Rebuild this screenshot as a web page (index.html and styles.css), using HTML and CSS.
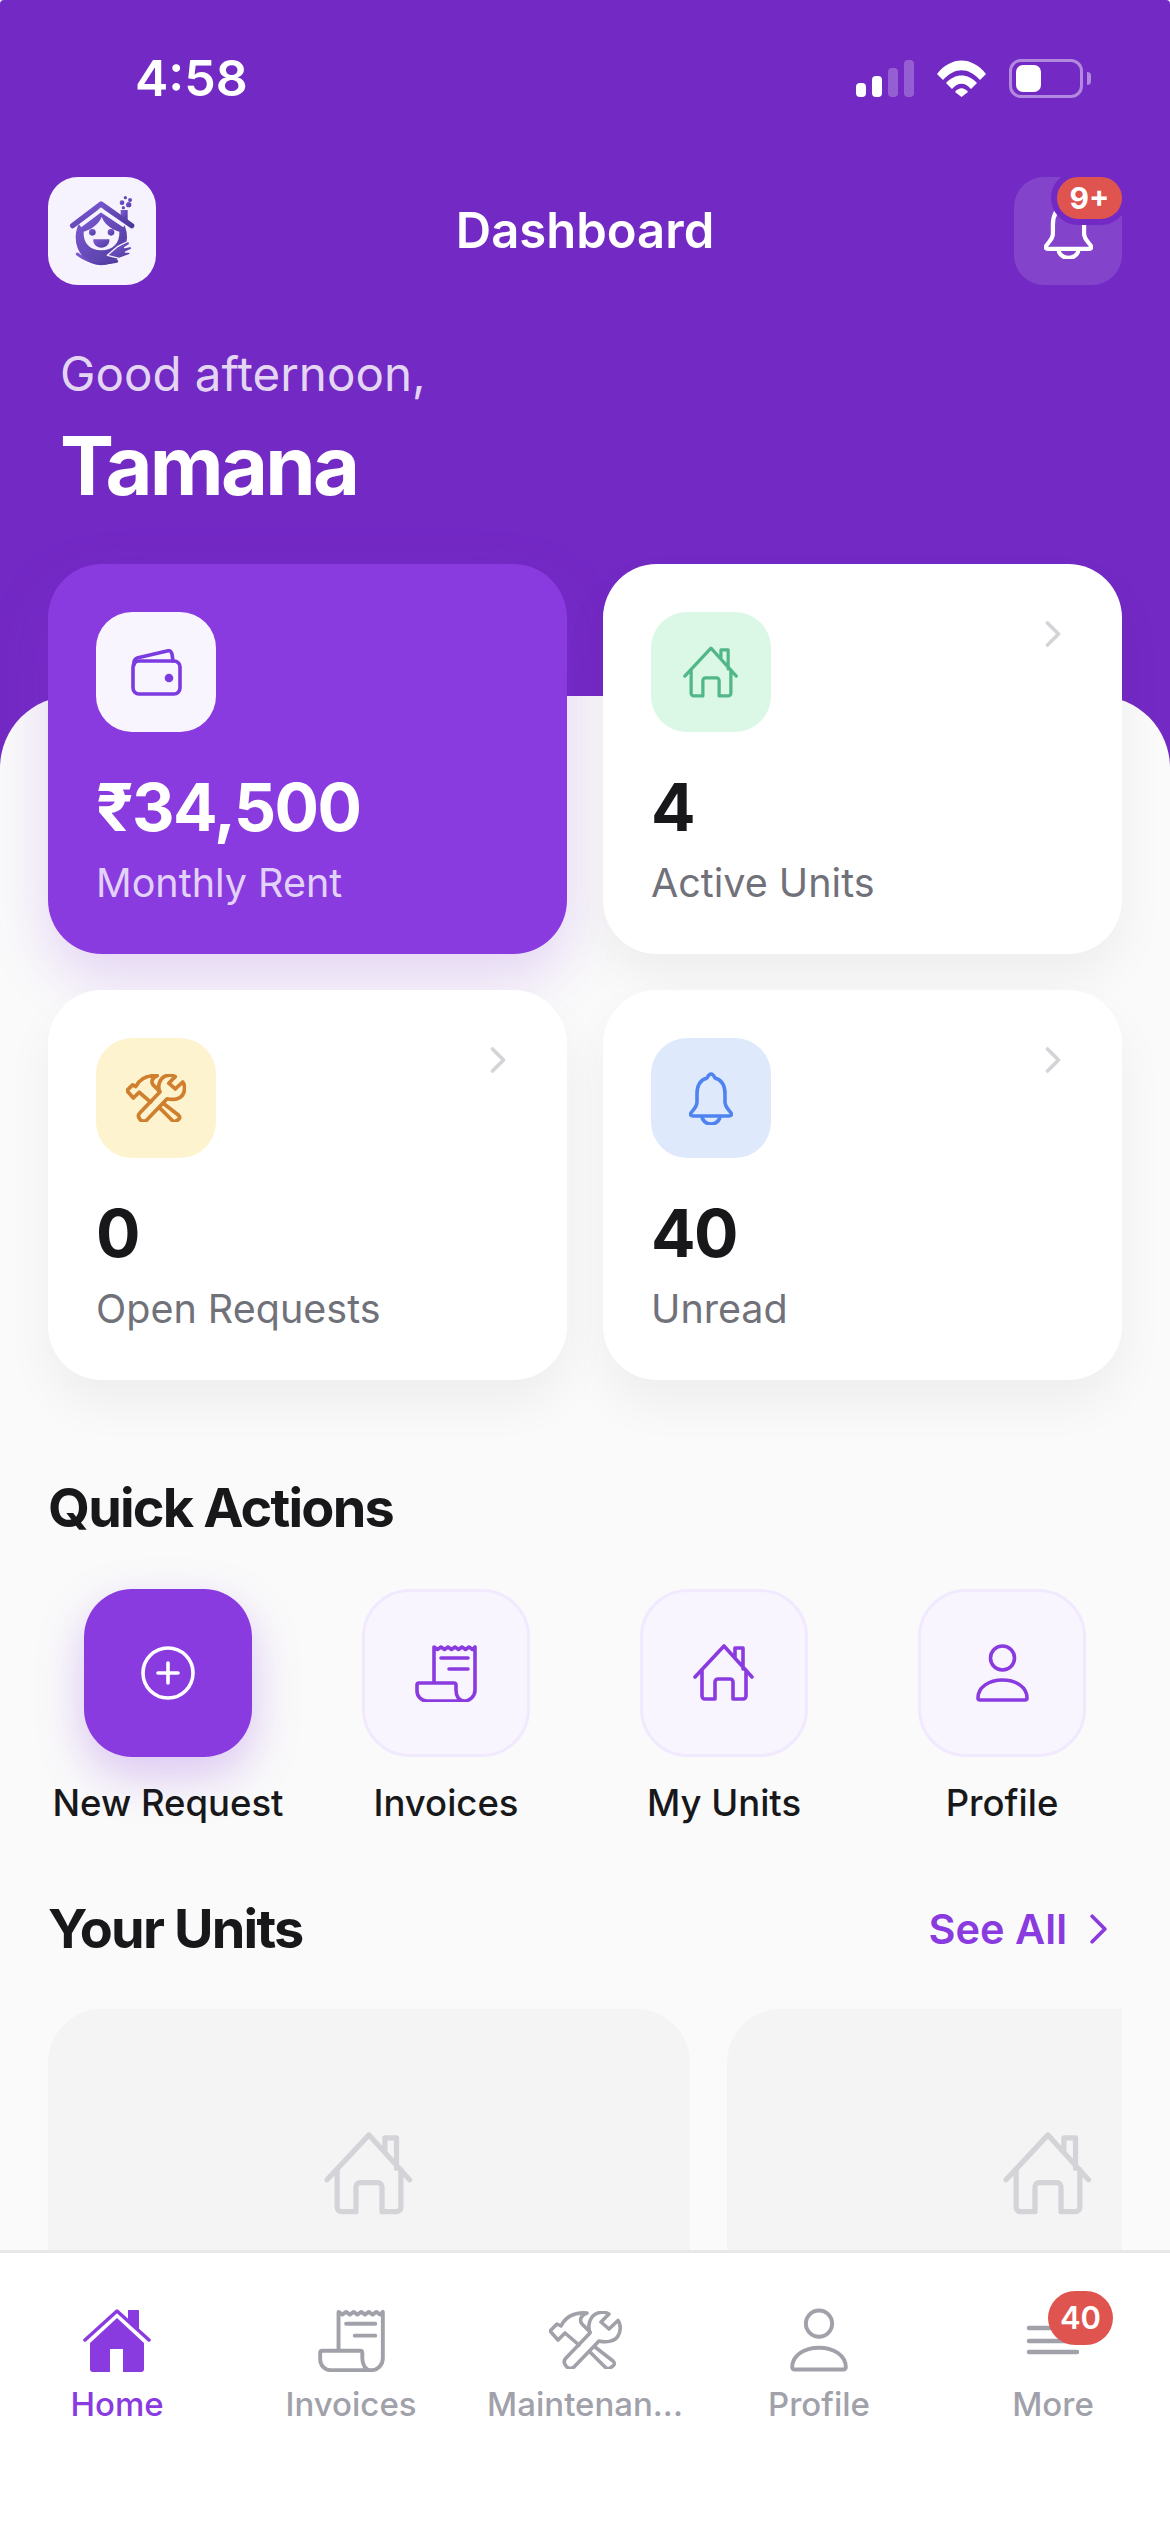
FILE: index.html
```html
<!DOCTYPE html>
<html lang="en">
<head>
<meta charset="utf-8">
<title>Dashboard</title>
<link rel="stylesheet" href="styles.css">
</head>
<body>
<svg class="defs" width="0" height="0" aria-hidden="true">
  <defs>
    <linearGradient id="logoGrad" x1="0" y1="0" x2="1" y2="1">
      <stop offset="0" stop-color="#7F5BD6"/>
      <stop offset="1" stop-color="#4E3A9C"/>
    </linearGradient>
    <symbol id="i-house" viewBox="0 0 62 58">
      <path d="M2 33 31 2l28 31M9 26v26a3 3 0 0 0 3 3h10V38a3 3 0 0 1 3-3h12a3 3 0 0 1 3 3v17h10a3 3 0 0 0 3-3V26M42 14V4h8v21"/>
    </symbol>
    <symbol id="i-invoice" viewBox="0 0 62 58">
      <path d="M19 38V3l3.5 2.5L26 3l3.5 2.5L33 3l3.5 2.5L40 3l3.5 2.5L47 3l3.5 2.5L54 3l3.5 2.5L60 3v43a11 11 0 0 1-11 11H12A10 10 0 0 1 2 47v-6a2 2 0 0 1 2-2h35a2 2 0 0 1 2 2v5c0 6 3 11 8 11M26 14h27M34 25h19"/>
    </symbol>
    <symbol id="i-person" viewBox="0 0 53 58">
      <circle cx="26.5" cy="14" r="12"/>
      <path d="M4 56h45a2 2 0 0 0 2-2c0-11-11-18-24.500-18S2 43 2 54a2 2 0 0 0 2 2Z"/>
    </symbol>
    <symbol id="i-tools" viewBox="0 0 73 58">
      <path d="M17 47 41 22c-3-8 0-19 10-20.500 3-.5 6 0 9 1.500l-8 8 8 7 9-8.500c3 3.500 3 10.500 0 15.500-3 5-11 7-19 5L25 56c-3 2-6 1.500-8-1-2.500-3-2-6 0-8Z"/>
      <path d="M46 36 64 50c2 2 2 3 0 5l-3 2c-2 1-3 1-5-1L41 41M30 34 16 22l-7 7-8-9 7-7 4 2C16 7 24 1 38 2c-6 2-8 7-5 11l8 8"/>
    </symbol>
    <symbol id="i-bell" viewBox="0 0 44 53">
      <path d="M22 2c2 0 3 2 4 4 7 2 10 8 10 16v8c0 5 4 8 6 11 1 2 0 3-2 3H4c-2 0-3-1-2-3 2-3 6-6 6-11v-8c0-8 3-14 10-16 1-2 2-4 4-4ZM13 44a9 8 0 0 0 18 0"/>
    </symbol>
    <symbol id="i-chevron" viewBox="0 0 16 26">
      <path d="m2.500 2 11 11-11 11"/>
    </symbol>
  </defs>
</svg>

<div class="page">
  <header class="hero">
    <div class="status">
      <span class="time">4:58</span>
      <div class="status-icons">
        <div class="signal">
          <span class="bar bar-1"></span>
          <span class="bar bar-2"></span>
          <span class="bar bar-3"></span>
          <span class="bar bar-4"></span>
        </div>
        <svg class="wifi" viewBox="0 0 49 37" width="49" height="37">
          <path d="M0 14 C14 -4 35 -4 49 14 L43 20 C31 7 18 7 6 20Z"/>
          <path d="M9 23 C18 13 31 13 40 23 L34 29 C28 22 21 22 15 29Z"/>
          <path d="M18 32 C22 27 27 27 31 32 L24.500 37Z"/>
        </svg>
        <div class="battery"><span class="battery-fill"></span></div>
        <span class="battery-tip"></span>
      </div>
    </div>

    <nav class="nav">
      <div class="logo">
        <svg viewBox="54 51 324 324" width="108" height="108">
          <g class="logo-ink">
            <path d="M272 150h21v34l-21-15Z"/>
            <ellipse cx="214" cy="232" rx="77" ry="84"/>
          </g>
          <path class="logo-gap" d="M150 197 213 150l70 47"/>
          <path class="logo-roof" d="M128 197 213 132l92 65"/>
          <path class="logo-face" d="M161 215c16-4 44-18 54-44 10 26 36 40 53 44 2 34-20 56-54 56s-55-22-53-56Z"/>
          <g class="logo-ink">
            <circle cx="187" cy="217" r="10"/>
            <circle cx="243" cy="217" r="10"/>
            <path d="M190 238h48c2 14-10 25-24 25s-26-11-24-25Z"/>
            <circle cx="286" cy="113" r="5"/>
            <circle cx="300" cy="120" r="6"/>
            <circle cx="276" cy="128" r="7"/>
            <circle cx="296" cy="134" r="8"/>
            <circle cx="280" cy="143" r="5"/>
          </g>
          <path class="logo-hand" d="m232 286 30-26 28-14c8-4 12 4 6 9l-12 8 14-3c8-2 10 6 4 9l-16 7 10 0c6 0 6 7 0 9l-28 10Z"/>
          <path class="logo-sweep" d="M142 282c30 24 72 32 118 22"/>
        </svg>
      </div>
      <h1 class="nav-title">Dashboard</h1>
      <div class="bell-box">
        <svg class="bell-icon" width="49" height="59"><use href="#i-bell"/></svg>
        <span class="bell-badge">9+</span>
      </div>
    </nav>

    <p class="greeting">Good afternoon,</p>
    <p class="name">Tamana</p>
  </header>

  <main class="sheet">
    <section class="stats">
      <article class="card card-primary">
        <div class="card-top">
          <div class="card-icon tint-white">
            <svg class="ic wallet" width="51" height="47" viewBox="0 0 51 47">
              <rect x="2" y="12" width="47" height="33" rx="6"/>
              <path d="M3 16v-3c0-2 1-3 3-4L36 2c3-1 4 0 5 3l1 7"/>
              <circle class="wallet-dot" cx="38" cy="29" r="2.500"/>
            </svg>
          </div>
        </div>
        <div class="card-value">₹34,500</div>
        <div class="card-label">Monthly Rent</div>
      </article>

      <article class="card">
        <div class="card-top">
          <div class="card-icon tint-green">
            <svg class="ic" width="56" height="53"><use href="#i-house"/></svg>
          </div>
          <svg class="ic chevron" width="16" height="26"><use href="#i-chevron"/></svg>
        </div>
        <div class="card-value">4</div>
        <div class="card-label">Active Units</div>
      </article>

      <article class="card">
        <div class="card-top">
          <div class="card-icon tint-yellow">
            <svg class="ic ic-tools" width="60" height="48"><use href="#i-tools"/></svg>
          </div>
          <svg class="ic chevron" width="16" height="26"><use href="#i-chevron"/></svg>
        </div>
        <div class="card-value">0</div>
        <div class="card-label">Open Requests</div>
      </article>

      <article class="card">
        <div class="card-top">
          <div class="card-icon tint-blue">
            <svg class="ic" width="44" height="53"><use href="#i-bell"/></svg>
          </div>
          <svg class="ic chevron" width="16" height="26"><use href="#i-chevron"/></svg>
        </div>
        <div class="card-value">40</div>
        <div class="card-label">Unread</div>
      </article>
    </section>

    <h2 class="heading heading-actions">Quick Actions</h2>
    <section class="actions">
      <div class="action">
        <div class="tile tile-primary">
          <svg class="ic" width="54" height="54" viewBox="0 0 54 54">
            <circle cx="27" cy="27" r="25"/>
            <path d="M27 17v20M17 27h20"/>
          </svg>
        </div>
        <span class="action-label">New Request</span>
      </div>
      <div class="action">
        <div class="tile"><svg class="ic" width="62" height="58"><use href="#i-invoice"/></svg></div>
        <span class="action-label">Invoices</span>
      </div>
      <div class="action">
        <div class="tile"><svg class="ic" width="62" height="58"><use href="#i-house"/></svg></div>
        <span class="action-label">My Units</span>
      </div>
      <div class="action">
        <div class="tile"><svg class="ic" width="53" height="58"><use href="#i-person"/></svg></div>
        <span class="action-label">Profile</span>
      </div>
    </section>

    <div class="units-head">
      <h2 class="heading">Your Units</h2>
      <div class="see-all">
        <span>See All</span>
        <svg class="ic see-all-arrow" width="19" height="30"><use href="#i-chevron"/></svg>
      </div>
    </div>
    <section class="units">
      <div class="unit"><svg class="ic" width="90" height="84"><use href="#i-house"/></svg></div>
      <div class="unit"><svg class="ic" width="90" height="84"><use href="#i-house"/></svg></div>
    </section>
  </main>

  <footer class="tabbar">
    <div class="tab tab-active">
      <div class="tab-icon">
        <svg width="68" height="64" viewBox="0 0 68 64">
          <path class="home-roof" d="M2 32 34 3l32 29"/>
          <path class="home-body" d="M45 2h10a1 1 0 0 1 1 1v20L45 13ZM34 10 61 35v26a3 3 0 0 1-3 3H40V41H27v23H10a3 3 0 0 1-3-3V35Z"/>
        </svg>
      </div>
      <span class="tab-label">Home</span>
    </div>
    <div class="tab">
      <div class="tab-icon"><svg class="ic" width="67" height="64"><use href="#i-invoice"/></svg></div>
      <span class="tab-label">Invoices</span>
    </div>
    <div class="tab">
      <div class="tab-icon"><svg class="ic" width="73" height="58"><use href="#i-tools"/></svg></div>
      <span class="tab-label">Maintenan...</span>
    </div>
    <div class="tab">
      <div class="tab-icon"><svg class="ic" width="58" height="64"><use href="#i-person"/></svg></div>
      <span class="tab-label">Profile</span>
    </div>
    <div class="tab">
      <div class="tab-icon">
        <svg class="ic menu" width="54" height="30" viewBox="0 0 54 30">
          <path d="M3 3h48M3 16h48M3 27h48"/>
        </svg>
        <span class="tab-badge">40</span>
      </div>
      <span class="tab-label">More</span>
    </div>
  </footer>
</div>
</body>
</html>
```

FILE: styles.css
```css
* { box-sizing: border-box; }

html, body {
  margin: 0;
  padding: 0;
  background: #fff;
}

body {
  font-family: Inter, "Liberation Sans", sans-serif;
  color: #18181b;
}

.defs { position: absolute; }

.page {
  width: 1170px;
  height: 2532px;
  display: flex;
  flex-direction: column;
  overflow: hidden;
}

/* Hero */
.hero {
  flex: 0 0 768px;
  background: #7329c4;
  color: #fff;
  border-radius: 4px 4px 0 0;
}

.status {
  display: flex;
  justify-content: space-between;
  align-items: center;
  height: 60px;
  margin-top: 48px;
  padding: 0 79px 0 135px;
}

.time {
  font-size: 50px;
  font-weight: 600;
  line-height: 60px;
}

.status-icons {
  display: flex;
  align-items: center;
}

.signal {
  display: flex;
  align-items: flex-end;
  gap: 6px;
  height: 37px;
}

.bar {
  width: 10px;
  border-radius: 4px;
  background: #fff;
}

.bar-1 { height: 14px; }
.bar-2 { height: 21px; }
.bar-3 { height: 29px; background: rgba(255, 255, 255, 0.25); }
.bar-4 { height: 37px; background: rgba(255, 255, 255, 0.25); }

.wifi {
  margin-left: 23px;
  fill: #fff;
}

.battery {
  width: 74px;
  height: 39px;
  margin-left: 23px;
  padding: 3px 4px;
  border: 3px solid rgba(255, 255, 255, 0.45);
  border-radius: 12px;
}

.battery-fill {
  display: block;
  width: 25px;
  height: 27px;
  border-radius: 7px;
  background: #fff;
}

.battery-tip {
  width: 4px;
  height: 13px;
  margin-left: 4px;
  border-radius: 0 4px 4px 0;
  background: rgba(255, 255, 255, 0.45);
}

.nav {
  display: flex;
  justify-content: space-between;
  align-items: center;
  margin-top: 69px;
  padding: 0 48px;
}

.logo {
  width: 108px;
  height: 108px;
  border-radius: 30px;
  background: #f7f3fe;
}

.logo svg { display: block; }

.logo-ink { fill: url(#logoGrad); }

.logo-face { fill: #f7f3fe; }

.logo-gap {
  fill: none;
  stroke: #f7f3fe;
  stroke-width: 12;
  stroke-linejoin: round;
}

.logo-roof {
  fill: none;
  stroke: url(#logoGrad);
  stroke-width: 16;
  stroke-linecap: round;
  stroke-linejoin: round;
}

.logo-hand {
  fill: url(#logoGrad);
  stroke: #f7f3fe;
  stroke-width: 4;
  stroke-linejoin: round;
}

.logo-sweep {
  fill: none;
  stroke: url(#logoGrad);
  stroke-width: 9;
  stroke-linecap: round;
}

.nav-title {
  margin: 0;
  font-size: 49px;
  font-weight: 600;
  line-height: 60px;
}

.bell-box {
  position: relative;
  display: flex;
  justify-content: center;
  width: 108px;
  height: 108px;
  padding-top: 23px;
  border-radius: 30px;
  background: rgba(255, 255, 255, 0.12);
}

.bell-icon {
  fill: none;
  stroke: #fff;
  stroke-width: 3.800;
  stroke-linecap: round;
  stroke-linejoin: round;
}

.bell-badge {
  position: absolute;
  top: -6px;
  right: -6px;
  min-width: 77px;
  height: 54px;
  border: 6px solid #7329c4;
  border-radius: 27px;
  background: #e0544f;
  color: #fff;
  font-size: 30px;
  font-weight: 700;
  line-height: 42px;
  text-align: center;
}

.greeting {
  margin: 59px 0 0;
  padding-left: 60px;
  font-size: 47.500px;
  line-height: 60px;
  color: rgba(255, 255, 255, 0.82);
}

.name {
  margin: 14px 0 0;
  padding-left: 60px;
  font-size: 81px;
  font-weight: 700;
  line-height: 96px;
  letter-spacing: -2.700px;
}

/* Sheet */
.sheet {
  position: relative;
  flex: 1;
  min-height: 0;
  margin-top: -72px;
  padding: 0 48px;
  border-radius: 72px 72px 0 0;
  background: #fafafa;
}

.stats {
  display: grid;
  grid-template-columns: 519px 519px;
  gap: 36px;
  margin-top: -132px;
}

.card {
  height: 390px;
  padding: 48px 48px 44px;
  border-radius: 54px;
  background: #fff;
  box-shadow: 0 24px 48px rgba(0, 0, 0, 0.05);
}

.card-primary {
  background: #8a3bdf;
  color: #fff;
  box-shadow: 0 24px 60px rgba(138, 59, 223, 0.2);
}

.card-top {
  display: flex;
  justify-content: space-between;
  align-items: flex-start;
}

.card-icon {
  display: flex;
  align-items: center;
  justify-content: center;
  width: 120px;
  height: 120px;
  border-radius: 36px;
}

.ic {
  fill: none;
  stroke: currentColor;
  stroke-width: 3.600;
  stroke-linecap: round;
  stroke-linejoin: round;
}

.ic-tools { stroke-width: 4.500; }

.wallet-dot { fill: currentColor; }

.tint-white { background: #f8f5ff; color: #7c3be0; }
.tint-green { background: #dbf7e6; color: #52b788; }
.tint-yellow { background: #fdf3cf; color: #cf7f2d; }
.tint-blue { background: #dee9fc; color: #4f83f0; }

.chevron {
  margin: 9px 13px 0 0;
  color: #d4d4d8;
}

.card-value {
  margin-top: 36px;
  font-size: 66px;
  font-weight: 700;
  line-height: 78px;
  letter-spacing: -1.600px;
}

.card-label {
  margin-top: 10px;
  font-size: 39.500px;
  line-height: 54px;
  color: #71717a;
}

.card-primary .card-label { color: #e2d2f9; }

/* Quick actions */
.heading {
  margin: 0;
  font-size: 54px;
  font-weight: 700;
  line-height: 66px;
  letter-spacing: -1.800px;
  color: #18181b;
}

.heading-actions { margin-top: 95px; }

.actions {
  display: grid;
  grid-template-columns: repeat(4, 1fr);
  gap: 38px;
  margin-top: 48px;
}

.action {
  display: flex;
  flex-direction: column;
  align-items: center;
}

.tile {
  display: flex;
  align-items: center;
  justify-content: center;
  width: 168px;
  height: 168px;
  border: 3px solid #f1e9fe;
  border-radius: 48px;
  background: #f8f5ff;
  color: #8a3bdf;
}

.tile-primary {
  border: 0;
  background: #8a3bdf;
  color: #fff;
  box-shadow: 0 18px 48px rgba(138, 59, 223, 0.28);
}

.action-label {
  margin-top: 22px;
  font-size: 36.500px;
  font-weight: 500;
  line-height: 48px;
  white-space: nowrap;
}

/* Units */
.units-head {
  display: flex;
  justify-content: space-between;
  align-items: center;
  margin-top: 69px;
}

.see-all {
  display: flex;
  align-items: center;
  gap: 22px;
  padding-right: 14px;
  font-size: 41.500px;
  font-weight: 600;
  color: #8a3bdf;
}

.see-all-arrow { stroke-width: 3.200; }

.units {
  display: flex;
  gap: 37px;
  height: 500px;
  margin-top: 47px;
  overflow: hidden;
}

.unit {
  flex: 0 0 642px;
  display: flex;
  justify-content: center;
  align-items: flex-start;
  padding-top: 123px;
  border-radius: 54px;
  background: #f4f4f4;
  color: #d4d4d8;
}

/* Tab bar */
.tabbar {
  position: relative;
  z-index: 1;
  flex: 0 0 282px;
  display: grid;
  grid-template-columns: repeat(5, 234px);
  padding-top: 55px;
  border-top: 3px solid #e8e8ea;
  background: #fff;
}

.tab {
  display: flex;
  flex-direction: column;
  align-items: center;
  color: #a1a1aa;
}

.tab-icon {
  position: relative;
  display: flex;
  align-items: center;
  justify-content: center;
  height: 64px;
}

.tab-label {
  margin-top: 8px;
  font-size: 33px;
  font-weight: 500;
  line-height: 48px;
  white-space: nowrap;
}

.tab-active { color: #8a3bdf; }

.home-roof {
  fill: none;
  stroke: #8a3bdf;
  stroke-width: 3.500;
  stroke-linecap: round;
  stroke-linejoin: round;
}

.home-body { fill: #8a3bdf; }

.menu { stroke-width: 4.500; }

.tab-badge {
  position: absolute;
  top: -17px;
  left: 22px;
  width: 65px;
  height: 54px;
  border-radius: 27px;
  background: #e0544f;
  color: #fff;
  font-size: 31px;
  font-weight: 600;
  line-height: 54px;
  text-align: center;
}
```
